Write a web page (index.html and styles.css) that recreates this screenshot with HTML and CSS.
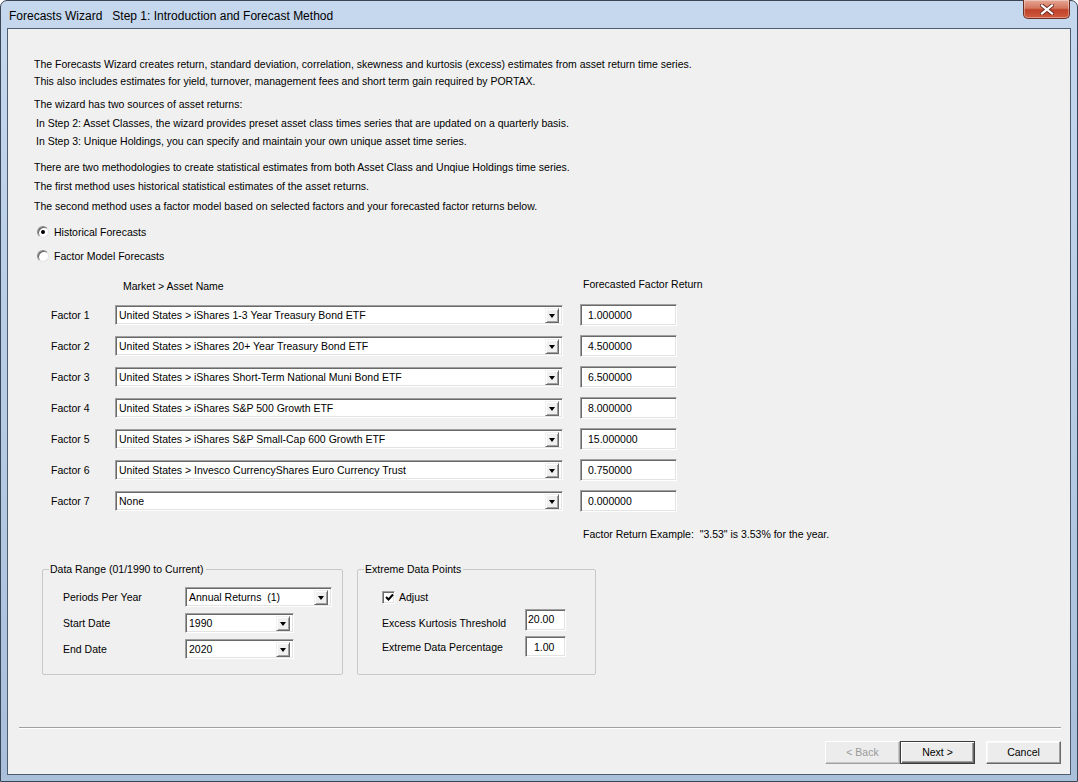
FILE: index.html
```html
<!DOCTYPE html>
<html>
<head>
<meta charset="utf-8">
<link rel="stylesheet" href="styles.css">
</head>
<body>
<div class="window">
  <div class="titlebar">
    <span class="title">Forecasts Wizard&nbsp;&nbsp; Step 1: Introduction and Forecast Method</span>
    <div class="close">
      <svg width="14" height="11" viewBox="0 0 14 11"><path d="M2 1.5 L12 9.5 M12 1.5 L2 9.5" stroke="#6b2a22" stroke-width="4" stroke-linecap="square"/><path d="M2 1.5 L12 9.5 M12 1.5 L2 9.5" stroke="#ffffff" stroke-width="2.2" stroke-linecap="square"/></svg>
    </div>
  </div>
  <div class="client">
    <div class="intro">
      <div class="p1">
        <div>The Forecasts Wizard creates return, standard deviation, correlation, skewness and kurtosis (excess) estimates from asset return time series.</div>
        <div>This also includes estimates for yield, turnover, management fees and short term gain required by PORTAX.</div>
      </div>
      <div class="p2">
        <div>The wizard has two sources of asset returns:</div>
        <div class="indent">In Step 2: Asset Classes, the wizard provides preset asset class times series that are updated on a quarterly basis.</div>
        <div class="indent">In Step 3: Unique Holdings, you can specify and maintain your own unique asset time series.</div>
      </div>
      <div class="p3">
        <div>There are two methodologies to create statistical estimates from both Asset Class and Unqiue Holdings time series.</div>
        <div>The first method uses historical statistical estimates of the asset returns.</div>
        <div>The second method uses a factor model based on selected factors and your forecasted factor returns below.</div>
      </div>
    </div>

    <div class="radios">
      <div class="radio-row"><span class="radio checked"></span><span>Historical Forecasts</span></div>
      <div class="radio-row"><span class="radio"></span><span>Factor Model Forecasts</span></div>
    </div>

    <div class="factor-head">
      <span></span>
      <span class="name-head">Market &gt; Asset Name</span>
      <span class="ret-head">Forecasted Factor Return</span>
    </div>

    <div class="factors">
      <div class="flabel">Factor 1</div>
      <div class="combo combo-factor"><span class="val">United States &gt; iShares 1-3 Year Treasury Bond ETF</span><span class="drop"><span class="tri"></span></span></div>
      <div></div>
      <div class="edit">1.000000</div>

      <div class="flabel">Factor 2</div>
      <div class="combo combo-factor"><span class="val">United States &gt; iShares 20+ Year Treasury Bond ETF</span><span class="drop"><span class="tri"></span></span></div>
      <div></div>
      <div class="edit">4.500000</div>

      <div class="flabel">Factor 3</div>
      <div class="combo combo-factor"><span class="val">United States &gt; iShares Short-Term National Muni Bond ETF</span><span class="drop"><span class="tri"></span></span></div>
      <div></div>
      <div class="edit">6.500000</div>

      <div class="flabel">Factor 4</div>
      <div class="combo combo-factor"><span class="val">United States &gt; iShares S&amp;P 500 Growth ETF</span><span class="drop"><span class="tri"></span></span></div>
      <div></div>
      <div class="edit">8.000000</div>

      <div class="flabel">Factor 5</div>
      <div class="combo combo-factor"><span class="val">United States &gt; iShares S&amp;P Small-Cap 600 Growth ETF</span><span class="drop"><span class="tri"></span></span></div>
      <div></div>
      <div class="edit">15.000000</div>

      <div class="flabel">Factor 6</div>
      <div class="combo combo-factor"><span class="val">United States &gt; Invesco CurrencyShares Euro Currency Trust</span><span class="drop"><span class="tri"></span></span></div>
      <div></div>
      <div class="edit">0.750000</div>

      <div class="flabel">Factor 7</div>
      <div class="combo combo-factor"><span class="val">None</span><span class="drop"><span class="tri"></span></span></div>
      <div></div>
      <div class="edit">0.000000</div>
    </div>

    <div class="example">Factor Return Example:&nbsp; "3.53" is 3.53% for the year.</div>

    <div class="groups">
      <fieldset class="group group-range">
        <legend>Data Range (01/1990 to Current)</legend>
        <div class="range-grid">
          <div class="glabel">Periods Per Year</div>
          <div class="combo combo-period"><span class="val">Annual Returns&nbsp; (1)</span><span class="drop"><span class="tri"></span></span></div>
          <div class="glabel">Start Date</div>
          <div class="combo combo-date"><span class="val">1990</span><span class="drop"><span class="tri"></span></span></div>
          <div class="glabel">End Date</div>
          <div class="combo combo-date"><span class="val">2020</span><span class="drop"><span class="tri"></span></span></div>
        </div>
      </fieldset>
      <fieldset class="group group-extreme">
        <legend>Extreme Data Points</legend>
        <div class="extreme-grid">
          <div class="check-row"><span class="check"><svg width="9" height="9" viewBox="0 0 9 9"><path d="M1 4 L3.5 6.5 L8 1.5" fill="none" stroke="#000" stroke-width="2"/></svg></span><span>Adjust</span></div>
          <div></div>
          <div class="glabel low">Excess Kurtosis Threshold</div>
          <div class="edit small kurt">20.00</div>
          <div class="glabel">Extreme Data Percentage</div>
          <div class="edit small pct">1.00</div>
        </div>
      </fieldset>
    </div>

    <div class="footer">
      <div class="separator"></div>
      <div class="buttons">
        <div class="btn disabled">&lt; Back</div>
        <div class="btn default">Next &gt;</div>
        <div class="btn cancel">Cancel</div>
      </div>
    </div>
  </div>
</div>
</body>
</html>
```
FILE: styles.css
```css
* { box-sizing: border-box; }
html, body { margin: 0; padding: 0; }
body {
  width: 1078px;
  height: 782px;
  overflow: hidden;
  background: #ffffff;
  font-family: "Liberation Sans", Arial, sans-serif;
  font-size: 10.5px;
  color: #000;
}
.window {
  width: 1078px;
  height: 782px;
  display: flex;
  flex-direction: column;
  border: 1px solid #3a4656;
  border-radius: 7px 7px 0 0;
  padding: 0 6px 6px 6px;
  background: linear-gradient(180deg, #c6d8ee 0%, #bcd0e8 30%, #a9bfda 100%);
}
.titlebar {
  height: 27px;
  display: flex;
  align-items: flex-start;
  justify-content: space-between;
}
.title {
  font-family: "Liberation Sans", Arial, sans-serif;
  font-size: 12px;
  line-height: 14px;
  margin: 8px 0 0 2px;
  color: #000;
}
.close {
  width: 47px;
  height: 19px;
  margin-right: 1px;
  margin-top: -1px;
  border: 1px solid #6d2e26;
  border-top: none;
  border-radius: 0 0 5px 5px;
  background: linear-gradient(180deg, #e6a796 0%, #d4775f 45%, #c0412a 55%, #cf5c3e 100%);
  display: flex;
  align-items: center;
  justify-content: center;
  box-shadow: inset 0 0 0 1px rgba(255,255,255,0.35);
}
.client {
  flex: 1;
  background: #f0f0f0;
  border: 1px solid #4d5c6e;
  display: flex;
  flex-direction: column;
}
.intro { margin: 27px 0 0 26px; }
.p1 { line-height: 17px; }
.p2 { line-height: 18.5px; margin-top: 5px; }
.p3 { line-height: 19.5px; margin-top: 7px; }
.indent { padding-left: 2px; }

.radios { margin: 4px 0 0 29px; }
.radio-row {
  height: 24px;
  display: flex;
  align-items: center;
  gap: 5px;
}
.radio {
  width: 12px;
  height: 12px;
  border-radius: 50%;
  background: #fff;
  border: 1px solid;
  border-color: #8a8a8a #e3e3e3 #e3e3e3 #8a8a8a;
  box-shadow: inset 1px 1px 0 #5e5e5e;
  display: flex;
  align-items: center;
  justify-content: center;
}
.radio.checked::after {
  content: "";
  width: 4px;
  height: 4px;
  border-radius: 50%;
  background: #000;
}

.factor-head {
  margin: 9px 0 0 43px;
  height: 16px;
  display: grid;
  grid-template-columns: 64px 465px 120px;
  line-height: 16px;
  white-space: nowrap;
}
.name-head { padding-left: 8px; margin-top: 1px; }
.ret-head { padding-left: 3px; margin-top: -1px; }

.factors {
  margin: 11px 0 0 43px;
  display: grid;
  grid-template-columns: 64px 448px 17px 97px;
  grid-auto-rows: 22px;
  row-gap: 9px;
  align-items: center;
}
.flabel { line-height: 14px; white-space: nowrap; }

.combo {
  height: 20px;
  background: #fff;
  border: 1px solid;
  border-color: #a0a0a0 #ffffff #ffffff #a0a0a0;
  box-shadow: inset 1px 1px 0 #696969, inset -1px -1px 0 #e3e3e3;
  display: flex;
  align-items: center;
  justify-content: space-between;
  padding: 0 3px 0 3px;
}
.combo .val { white-space: nowrap; line-height: 14px; }
.combo-factor { width: 448px; }
.combo-period { width: 147px; }
.combo-date { width: 109px; }
.drop {
  width: 14px;
  height: 15px;
  background: #f0f0f0;
  border: 1px solid;
  border-color: #f0f0f0 #696969 #696969 #f0f0f0;
  box-shadow: inset 1px 1px 0 #ffffff, inset -1px -1px 0 #a0a0a0;
  display: flex;
  align-items: center;
  justify-content: center;
}
.tri {
  width: 0;
  height: 0;
  border-left: 3.5px solid transparent;
  border-right: 3.5px solid transparent;
  border-top: 4px solid #000;
  margin-top: 1px;
}
.edit {
  height: 22px;
  width: 97px;
  background: #fff;
  border: 1px solid;
  border-color: #a0a0a0 #ffffff #ffffff #a0a0a0;
  box-shadow: inset 1px 1px 0 #696969, inset -1px -1px 0 #e3e3e3;
  padding: 3px 0 0 7px;
  line-height: 14px;
  white-space: nowrap;
}

.example { margin: 15px 0 0 575px; line-height: 14px; }

.groups {
  margin: 21px 0 0 34px;
  display: flex;
  gap: 14px;
  align-items: flex-start;
}
.group {
  margin: 0;
  padding: 0;
  border: 1px solid #c8c8c8;
  border-radius: 2px;
  min-width: 0;
  height: 113px;
}
.group legend {
  padding: 0 2px 0 1px;
  margin-left: 6px;
  line-height: 14px;
  height: 14px;
  font-size: 10.5px;
}
.group-range { width: 301px; }
.group-extreme { width: 239px; }

.range-grid {
  display: grid;
  grid-template-columns: 142px auto;
  grid-auto-rows: 20px;
  row-gap: 6px;
  align-items: center;
  margin-top: 11px;
}
.glabel { padding-left: 20px; line-height: 14px; white-space: nowrap; }

.extreme-grid {
  display: grid;
  grid-template-columns: 167px 41px;
  grid-template-rows: 14px 22px 21px;
  row-gap: 5px;
  align-items: center;
  margin-top: 14px;
}
.extreme-grid .glabel { padding-left: 24px; }
.extreme-grid .glabel.low { margin-top: 5px; }
.check-row {
  display: flex;
  align-items: center;
  gap: 4px;
  padding-left: 24px;
  white-space: nowrap;
}
.check {
  width: 13px;
  height: 13px;
  background: #fff;
  border: 1px solid;
  border-color: #a0a0a0 #ffffff #ffffff #a0a0a0;
  box-shadow: inset 1px 1px 0 #696969, inset -1px -1px 0 #e3e3e3;
  display: flex;
  align-items: center;
  justify-content: center;
}
.check svg { margin: 1px 0 0 1px; }
.edit.small { width: 41px; }
.edit.kurt { height: 22px; padding: 2px 0 0 2px; }
.edit.pct { height: 21px; padding: 3px 0 0 8px; }

.footer { margin-top: auto; }
.separator {
  margin: 0 9px 0 11px;
  height: 2px;
  border-top: 1px solid #a0a0a0;
  border-bottom: 1px solid #ffffff;
}
.buttons {
  display: flex;
  justify-content: flex-end;
  margin: 12px 9px 10px 0;
}
.btn {
  width: 75px;
  height: 23px;
  line-height: 21px;
  text-align: center;
  background: #ececec;
  border: 1px solid;
  border-color: #ffffff #696969 #696969 #ffffff;
  box-shadow: inset -1px -1px 0 #a0a0a0, inset 1px 1px 0 #f8f8f8;
}
.btn.disabled {
  color: #9a9a9a;
  border-color: #ffffff #a0a0a0 #a0a0a0 #ffffff;
  box-shadow: inset -1px -1px 0 #c8c8c8;
}
.btn.default {
  border: 1px solid #3c3c3c;
  box-shadow: inset 1px 1px 0 #ffffff, inset -1px -1px 0 #696969, inset -2px -2px 0 #a0a0a0;
}
.btn.cancel { margin-left: 11px; }
```
